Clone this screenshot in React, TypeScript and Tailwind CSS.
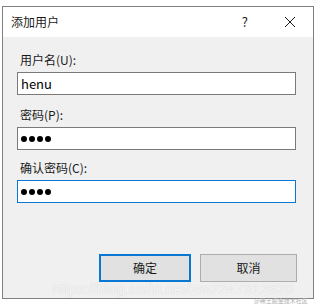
import React from "react";

const font = { fontFamily: '"Noto Sans CJK SC", "Noto Sans", sans-serif' };

function Field({ label, value, focused, dots }: { label: string; value: string; focused?: boolean; dots?: boolean }) {
  return (
    <div className="flex flex-col">
      <div className="pl-[3px] text-[12px] leading-[16px] text-[#1a1a1a]">{label}</div>
      <div
        className={
          "mt-[4px] h-[23px] w-[279px] bg-white border flex items-center pl-[3px] " +
          (focused ? "border-[#0a78d2]" : "border-[#7a7a7a]")
        }
      >
        {dots ? (
          <span className="flex gap-[2px]">
            <span className="w-[6px] h-[6px] rounded-full bg-black" />
            <span className="w-[6px] h-[6px] rounded-full bg-black" />
            <span className="w-[6px] h-[6px] rounded-full bg-black" />
            <span className="w-[6px] h-[6px] rounded-full bg-black" />
          </span>
        ) : (
          <span className="text-[13px] leading-none text-black">{value}</span>
        )}
      </div>
    </div>
  );
}

export default function App() {
  return (
    <div className="w-[323px] h-[306px] bg-white pt-[6px] pl-[2px] relative overflow-hidden" style={font}>
      <div className="w-[312px] h-[293px] border border-[#808080] flex flex-col">
        <div className="h-[30px] bg-white flex items-center pl-[8px] shrink-0">
          <span className="text-[12px] text-[#1a1a1a]">添加用户</span>
          <span className="ml-auto text-[13px] text-[#1a1a1a] mr-[36px]">?</span>
          <svg width="12" height="12" viewBox="0 0 12 12" className="mr-[17px]">
            <path d="M1 1 L11 11 M11 1 L1 11" stroke="#1a1a1a" strokeWidth="1" />
          </svg>
        </div>
        <div className="flex-1 bg-[#f0f0f0] pl-[14px] pt-[15px] flex flex-col">
          <Field label="用户名(U):" value="henu" />
          <div className="h-[12px]" />
          <Field label="密码(P):" value="" dots />
          <div className="h-[10px]" />
          <Field label="确认密码(C):" value="" dots focused />
          <div className="mt-[51px] flex pl-[82px] gap-[9px]">
            <div className="w-[92px] h-[28px] border-2 border-[#0a78d2] bg-[#e1e1e1] flex items-center justify-center text-[12px] text-[#1a1a1a]">
              确定
            </div>
            <div className="w-[97px] h-[28px] border border-[#adadad] bg-[#e1e1e1] flex items-center justify-center text-[12px] text-[#1a1a1a]">
              取消
            </div>
          </div>
        </div>
      </div>
      <div className="absolute left-[52px] top-[282px] text-[15px] leading-[14px] text-white/80 whitespace-nowrap" style={{ fontFamily: '"Liberation Sans", sans-serif', textShadow: "0 0 1px rgba(0,0,0,0.2)" }}>
        https://blog.csdn.net/zm2247312620
      </div>
      <div className="absolute left-[254px] top-[297px] text-[6px] leading-[7px] text-[#b0b0b0] whitespace-nowrap">
        @稀土掘金技术社区
      </div>
    </div>
  );
}
